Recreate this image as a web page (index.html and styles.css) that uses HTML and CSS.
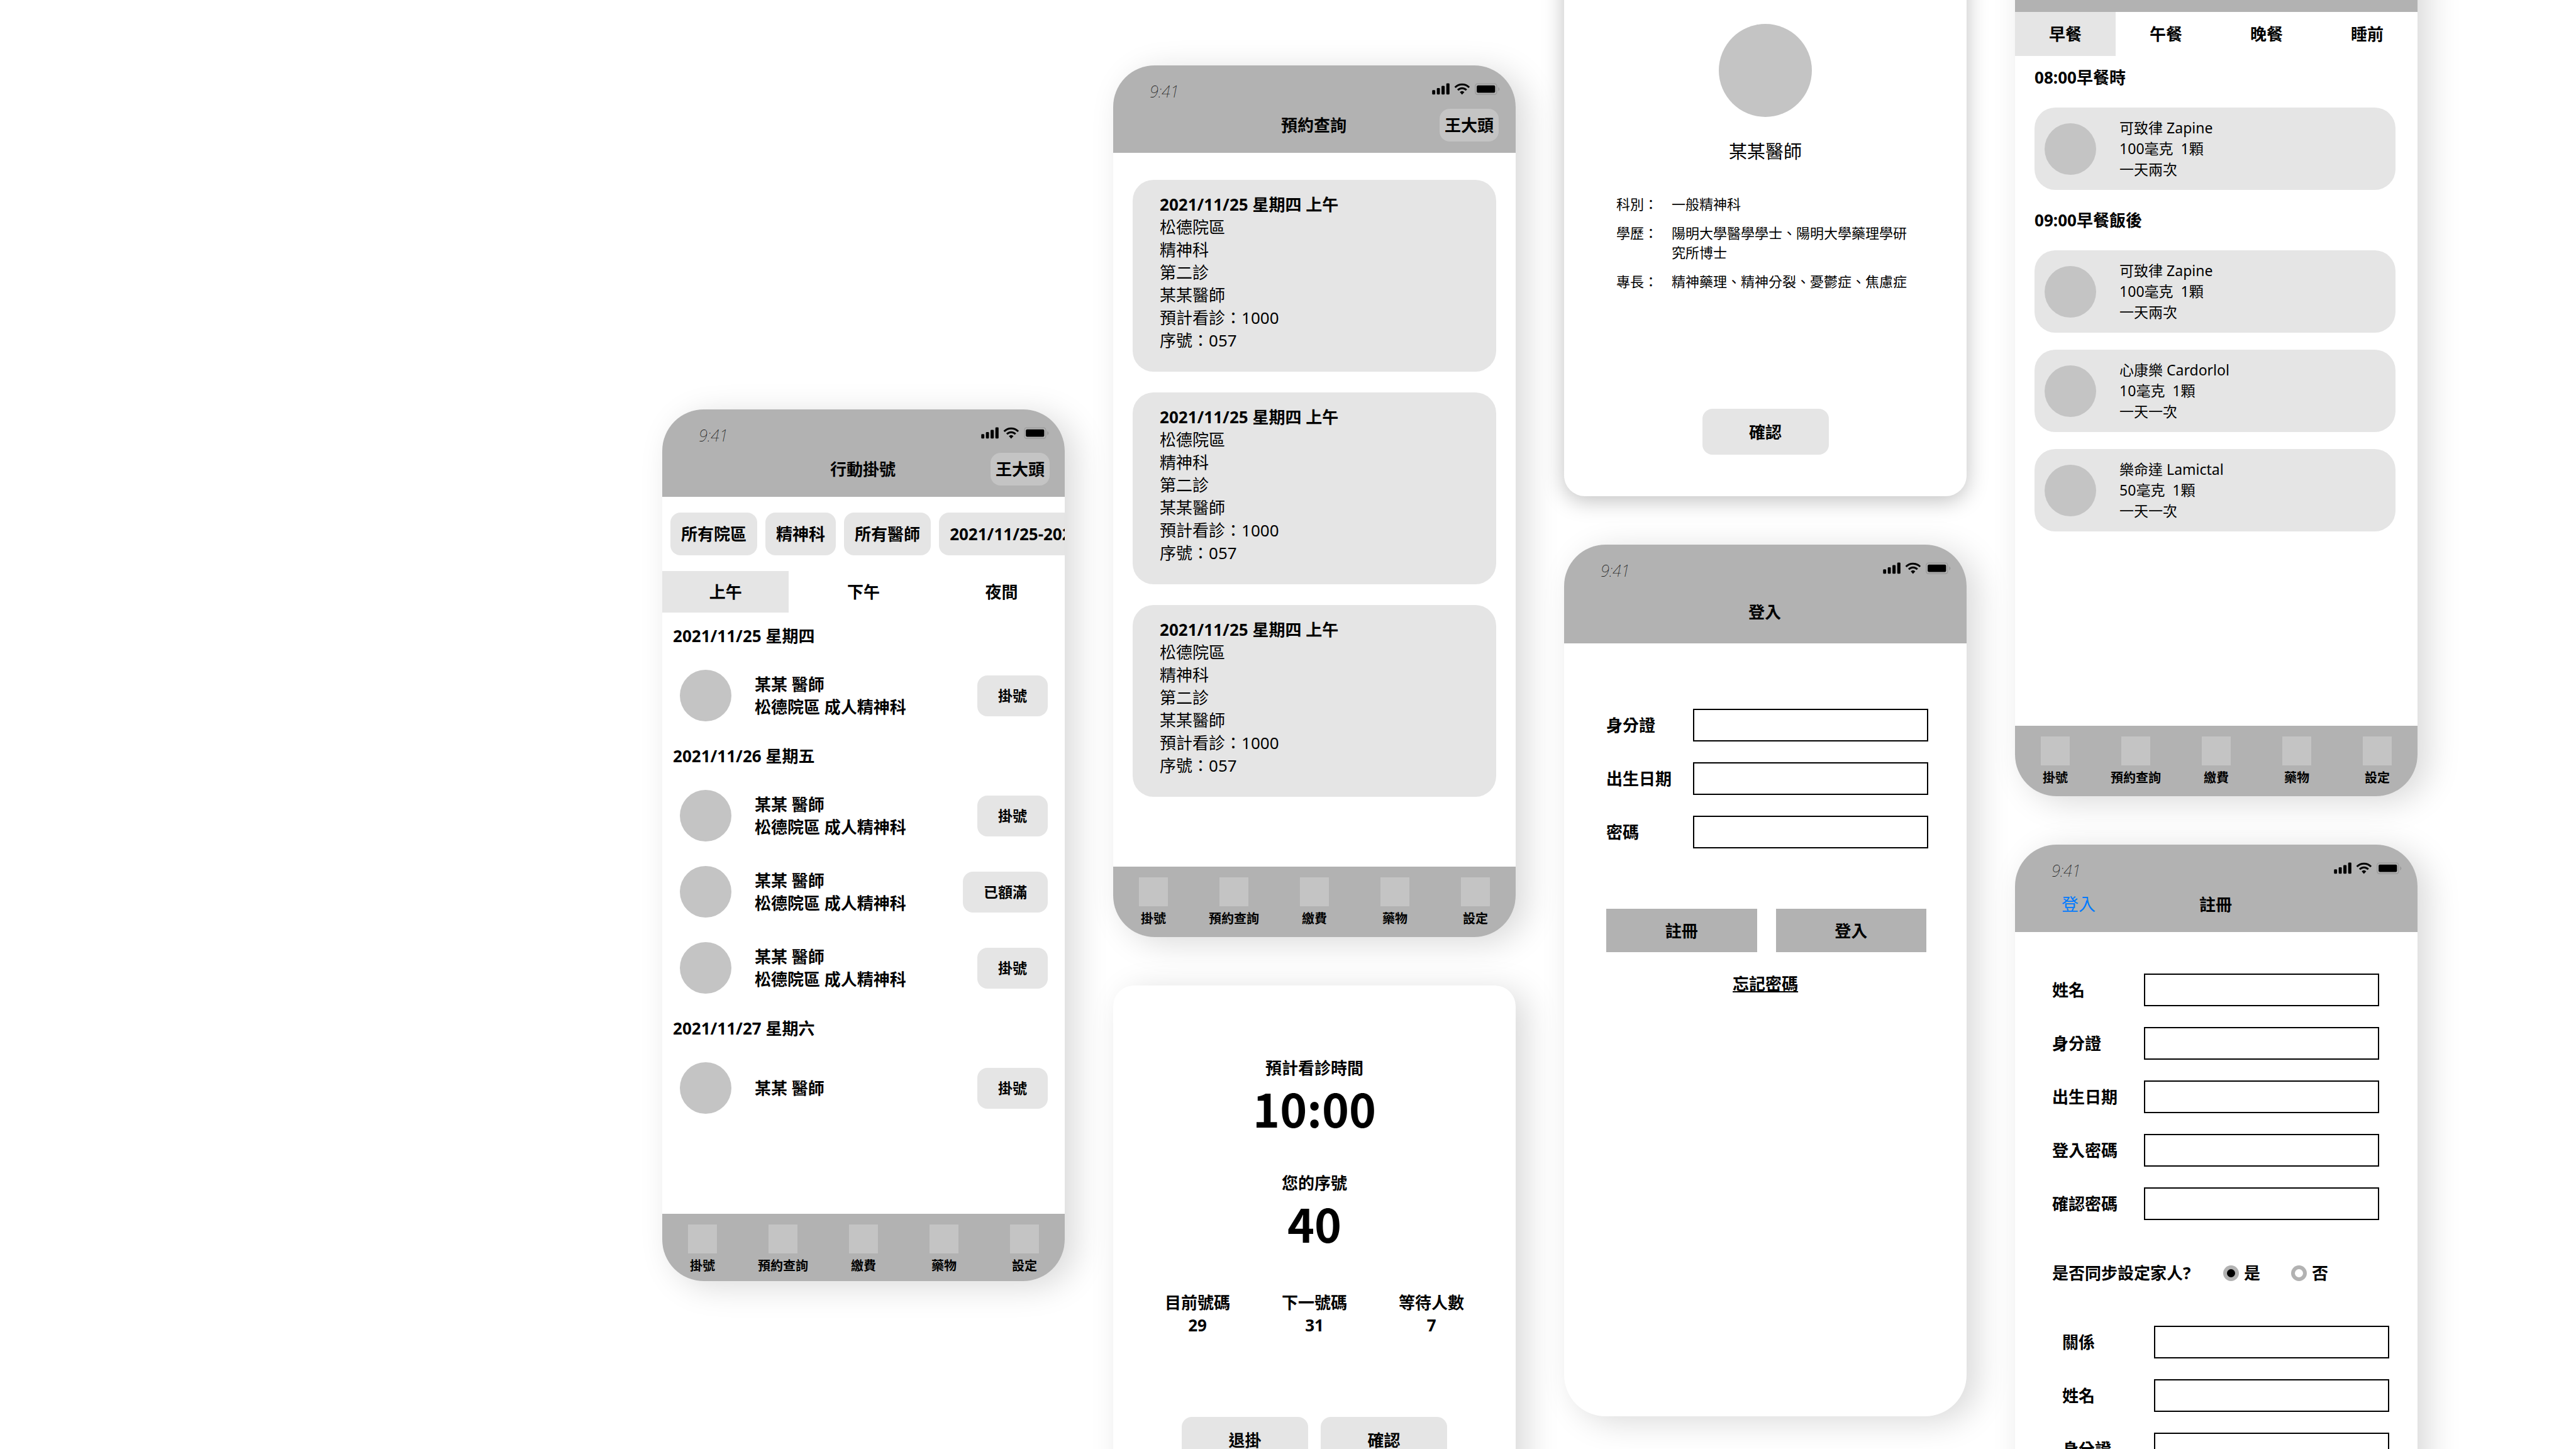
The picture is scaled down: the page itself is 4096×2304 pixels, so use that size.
FILE: index.html
```html
<!DOCTYPE html>
<html lang="zh-Hant">
<head>
<meta charset="utf-8">
<meta name="viewport" content="width=device-width, initial-scale=1">
<title>行動掛號</title>
<link rel="stylesheet" href="styles.css">
</head>
<body>
<svg class="sprite" aria-hidden="true">
  <symbol id="status-icons" viewBox="45 43 464 82">
    <rect x="45" y="92" width="21" height="30" rx="6"/>
    <rect x="77" y="77" width="21" height="45" rx="6"/>
    <rect x="109" y="62" width="22" height="60" rx="6"/>
    <rect x="142" y="45" width="22" height="77" rx="6"/>
    <path d="M202 73A68 68 0 0 1 299 73" fill="none" stroke="#000" stroke-width="13"/>
    <path d="M221 92A40 40 0 0 1 280 92" fill="none" stroke="#000" stroke-width="13"/>
    <path d="M235 106Q250 91 266 106L250 123Z"/>
    <rect x="341" y="48" width="147" height="74" rx="16" fill="none" stroke="#000" stroke-opacity=".13" stroke-width="6"/>
    <rect x="351" y="59" width="126" height="51" rx="9"/>
    <path d="M498 71Q508 76 508 85Q508 94 498 99Z" fill-opacity=".13"/>
  </symbol>
</svg>

<main class="board">
  <div class="column column--booking">
    <section class="phone">
      <header class="header">
        <div class="status"><span class="status__time">9:41</span><svg class="status__icons" aria-hidden="true"><use href="#status-icons"/></svg></div>
        <div class="header__row"><h1 class="header__title">行動掛號</h1><button class="pill" type="button">王大頭</button></div>
      </header>
      <div class="filters">
        <button class="filter" type="button">所有院區</button>
        <button class="filter" type="button">精神科</button>
        <button class="filter" type="button">所有醫師</button>
        <button class="filter" type="button">2021/11/25-2021/12/25</button>
      </div>
      <div class="tabs tabs--three">
        <button class="tab tab--active" type="button">上午</button>
        <button class="tab" type="button">下午</button>
        <button class="tab" type="button">夜間</button>
      </div>
      <div class="schedule">
        <section class="day">
          <h2 class="day__title">2021/11/25 星期四</h2>
          <ul class="doctors">
            <li class="doctor"><span class="avatar"></span><p class="doctor__text">某某 醫師<br>松德院區 成人精神科</p><button class="book" type="button">掛號</button></li>
          </ul>
        </section>
        <section class="day">
          <h2 class="day__title">2021/11/26 星期五</h2>
          <ul class="doctors">
            <li class="doctor"><span class="avatar"></span><p class="doctor__text">某某 醫師<br>松德院區 成人精神科</p><button class="book" type="button">掛號</button></li>
            <li class="doctor"><span class="avatar"></span><p class="doctor__text">某某 醫師<br>松德院區 成人精神科</p><button class="book" type="button">已額滿</button></li>
            <li class="doctor"><span class="avatar"></span><p class="doctor__text">某某 醫師<br>松德院區 成人精神科</p><button class="book" type="button">掛號</button></li>
          </ul>
        </section>
        <section class="day">
          <h2 class="day__title">2021/11/27 星期六</h2>
          <ul class="doctors">
            <li class="doctor"><span class="avatar"></span><p class="doctor__text">某某 醫師</p><button class="book" type="button">掛號</button></li>
          </ul>
        </section>
      </div>
      <nav class="tabbar tabbar--short">
        <a class="tabbar__item" href="#">掛號</a>
        <a class="tabbar__item" href="#">預約查詢</a>
        <a class="tabbar__item" href="#">繳費</a>
        <a class="tabbar__item" href="#">藥物</a>
        <a class="tabbar__item" href="#">設定</a>
      </nav>
    </section>
  </div>

  <div class="column column--lookup">
    <section class="phone">
      <header class="header">
        <div class="status"><span class="status__time">9:41</span><svg class="status__icons" aria-hidden="true"><use href="#status-icons"/></svg></div>
        <div class="header__row"><h1 class="header__title">預約查詢</h1><button class="pill pill--inset" type="button">王大頭</button></div>
      </header>
      <div class="visits">
        <article class="visit"><h2 class="visit__title">2021/11/25 星期四 上午</h2><p>松德院區<br>精神科<br>第二診<br>某某醫師<br>預計看診：1000<br>序號：057</p></article>
        <article class="visit"><h2 class="visit__title">2021/11/25 星期四 上午</h2><p>松德院區<br>精神科<br>第二診<br>某某醫師<br>預計看診：1000<br>序號：057</p></article>
        <article class="visit"><h2 class="visit__title">2021/11/25 星期四 上午</h2><p>松德院區<br>精神科<br>第二診<br>某某醫師<br>預計看診：1000<br>序號：057</p></article>
      </div>
      <nav class="tabbar">
        <a class="tabbar__item" href="#">掛號</a>
        <a class="tabbar__item" href="#">預約查詢</a>
        <a class="tabbar__item" href="#">繳費</a>
        <a class="tabbar__item" href="#">藥物</a>
        <a class="tabbar__item" href="#">設定</a>
      </nav>
    </section>

    <section class="dialog">
      <h2 class="dialog__label">預計看診時間</h2>
      <p class="dialog__figure">10:00</p>
      <h2 class="dialog__label dialog__label--next">您的序號</h2>
      <p class="dialog__figure">40</p>
      <dl class="counts">
        <div><dt>目前號碼</dt><dd>29</dd></div>
        <div><dt>下一號碼</dt><dd>31</dd></div>
        <div><dt>等待人數</dt><dd>7</dd></div>
      </dl>
      <div class="dialog__actions">
        <button class="action" type="button">退掛</button>
        <button class="action" type="button">確認</button>
      </div>
    </section>
  </div>

  <div class="column column--doctor">
    <section class="profile">
      <span class="avatar avatar--large"></span>
      <h2 class="profile__name">某某醫師</h2>
      <dl class="facts">
        <dt>科別：</dt><dd>一般精神科</dd>
        <dt>學歷：</dt><dd>陽明大學醫學學士、陽明大學藥理學研究所博士</dd>
        <dt>專長：</dt><dd>精神藥理、精神分裂、憂鬱症、焦慮症</dd>
      </dl>
      <button class="action" type="button">確認</button>
    </section>

    <section class="phone">
      <header class="header header--tall">
        <div class="status"><span class="status__time">9:41</span><svg class="status__icons" aria-hidden="true"><use href="#status-icons"/></svg></div>
        <div class="header__row"><h1 class="header__title">登入</h1></div>
      </header>
      <form class="form form--login">
        <div class="field"><label class="field__label" for="login-id">身分證</label><input class="field__input" id="login-id" type="text"></div>
        <div class="field"><label class="field__label" for="login-birth">出生日期</label><input class="field__input" id="login-birth" type="text"></div>
        <div class="field"><label class="field__label" for="login-pass">密碼</label><input class="field__input" id="login-pass" type="password"></div>
        <div class="form__actions">
          <button class="submit" type="button">註冊</button>
          <button class="submit" type="submit">登入</button>
        </div>
      </form>
      <a class="forgot" href="#">忘記密碼</a>
    </section>
  </div>

  <div class="column column--medicine">
    <section class="phone">
      <header class="header">
        <div class="status"><span class="status__time">9:41</span><svg class="status__icons" aria-hidden="true"><use href="#status-icons"/></svg></div>
        <div class="header__row"></div>
      </header>
      <div class="tabs tabs--four">
        <button class="tab tab--active" type="button">早餐</button>
        <button class="tab" type="button">午餐</button>
        <button class="tab" type="button">晚餐</button>
        <button class="tab" type="button">睡前</button>
      </div>
      <div class="meals">
        <section class="meal">
          <h2 class="meal__title">08:00早餐時</h2>
          <ul class="drugs">
            <li class="drug"><span class="avatar"></span><p>可致律 Zapine<br>100毫克&nbsp; 1顆<br>一天兩次</p></li>
          </ul>
        </section>
        <section class="meal">
          <h2 class="meal__title">09:00早餐飯後</h2>
          <ul class="drugs">
            <li class="drug"><span class="avatar"></span><p>可致律 Zapine<br>100毫克&nbsp; 1顆<br>一天兩次</p></li>
            <li class="drug"><span class="avatar"></span><p>心康樂 Cardorlol<br>10毫克&nbsp; 1顆<br>一天一次</p></li>
            <li class="drug"><span class="avatar"></span><p>樂命達 Lamictal<br>50毫克&nbsp; 1顆<br>一天一次</p></li>
          </ul>
        </section>
      </div>
      <nav class="tabbar">
        <a class="tabbar__item" href="#">掛號</a>
        <a class="tabbar__item" href="#">預約查詢</a>
        <a class="tabbar__item" href="#">繳費</a>
        <a class="tabbar__item" href="#">藥物</a>
        <a class="tabbar__item" href="#">設定</a>
      </nav>
    </section>

    <section class="phone">
      <header class="header">
        <div class="status"><span class="status__time">9:41</span><svg class="status__icons" aria-hidden="true"><use href="#status-icons"/></svg></div>
        <div class="header__row"><a class="back" href="#">登入</a><h1 class="header__title">註冊</h1></div>
      </header>
      <form class="form form--register">
        <div class="field"><label class="field__label" for="reg-name">姓名</label><input class="field__input" id="reg-name" type="text"></div>
        <div class="field"><label class="field__label" for="reg-id">身分證</label><input class="field__input" id="reg-id" type="text"></div>
        <div class="field"><label class="field__label" for="reg-birth">出生日期</label><input class="field__input" id="reg-birth" type="text"></div>
        <div class="field"><label class="field__label" for="reg-pass">登入密碼</label><input class="field__input" id="reg-pass" type="password"></div>
        <div class="field"><label class="field__label" for="reg-again">確認密碼</label><input class="field__input" id="reg-again" type="password"></div>
        <div class="choice" role="radiogroup" aria-labelledby="family-question">
          <span class="choice__question" id="family-question">是否同步設定家人?</span>
          <label class="choice__option"><input class="radio" type="radio" name="family" checked>是</label>
          <label class="choice__option"><input class="radio" type="radio" name="family">否</label>
        </div>
        <div class="family">
          <div class="field"><label class="field__label" for="fam-relation">關係</label><input class="field__input" id="fam-relation" type="text"></div>
          <div class="field"><label class="field__label" for="fam-name">姓名</label><input class="field__input" id="fam-name" type="text"></div>
          <div class="field"><label class="field__label" for="fam-id">身分證</label><input class="field__input" id="fam-id" type="text"></div>
        </div>
      </form>
    </section>
  </div>
</main>
</body>
</html>
```
FILE: styles.css
```css
:root {
  --bar: #b2b2b2;
  --fill: #e5e5e5;
  --dot: #c4c4c4;
  --shadow: 17px 9px 52px rgba(0, 0, 0, .15);
}

* {
  box-sizing: border-box;
  margin: 0;
  padding: 0;
}

body {
  background: #fff;
  color: #000;
  font: 400 26px/36px "Noto Sans", "Noto Sans CJK TC", sans-serif;
}

h1,
h2,
button,
input {
  font: inherit;
  font-weight: 700;
}

button {
  border: 0;
  color: inherit;
  cursor: pointer;
  white-space: nowrap;
}

a {
  color: inherit;
}

ul {
  list-style: none;
}

.sprite {
  position: absolute;
  width: 0;
  height: 0;
}

/* Board of artboards, each column starting at its own height */
.board {
  display: grid;
  grid-template-columns: repeat(4, minmax(0, 1fr));
  align-items: start;
  gap: 77px;
  height: 100vh;
  padding: 0 6.15% 0 25.71%;
  overflow: hidden;
}

.column {
  display: flex;
  flex-direction: column;
  gap: 77px;
}

.column--booking { margin-top: 651px; }
.column--lookup { margin-top: 104px; }
.column--doctor { margin-top: -121px; }
.column--medicine { margin-top: -120px; }

.phone {
  display: flex;
  flex-direction: column;
  min-height: 1386px;
  border-radius: 66px;
  background: #fff;
  box-shadow: var(--shadow);
}

/* Header */
.header {
  display: flex;
  flex-direction: column;
  gap: 10px;
  padding: 23px 24px 18px 58px;
  border-radius: 66px 66px 0 0;
  background: var(--bar);
}

.header--tall {
  gap: 22px;
  padding-bottom: 24px;
}

.status {
  display: flex;
  align-items: flex-start;
  justify-content: space-between;
}

.status__time {
  font-size: 25px;
  font-style: italic;
  font-weight: 100;
}

.status__icons {
  width: 110px;
  height: 19px;
  margin-top: 5px;
}

.header__row {
  display: grid;
  grid-template-columns: 1fr auto 1fr;
  align-items: center;
  height: 52px;
  margin-left: -36px;
}

.header__title {
  grid-column: 2;
}

.pill {
  grid-column: 3;
  justify-self: end;
  height: 52px;
  padding: 0 8px;
  border-radius: 16px;
  background: var(--dot);
}

.pill--inset {
  margin-right: 3px;
}

.back {
  grid-column: 1;
  padding-left: 52px;
  color: #007aff;
  font-size: 27px;
  text-decoration: none;
}

/* Filters and tabs */
.filters {
  display: flex;
  gap: 13px;
  padding: 25px 0 25px 13px;
  overflow: hidden;
}

.filter {
  flex: none;
  height: 68px;
  padding: 0 17px;
  border-radius: 16px;
  background: var(--fill);
}

.tabs {
  display: grid;
}

.tabs--three {
  grid-template-columns: repeat(3, 1fr);
  gap: 18px;
}

.tabs--four {
  grid-template-columns: repeat(4, 1fr);
}

.tab {
  height: 66px;
  background: none;
}

.tabs--four .tab {
  height: 70px;
}

.tab--active {
  background: var(--fill);
}

/* Doctor schedule */
.schedule {
  display: flex;
  flex-direction: column;
  gap: 37px;
  padding: 19px 27px 36px 17px;
}

.day {
  display: flex;
  flex-direction: column;
  gap: 36px;
}

.doctors {
  display: flex;
  flex-direction: column;
  gap: 39px;
}

.doctor {
  display: flex;
  align-items: center;
  gap: 37px;
  padding-left: 11px;
  font-weight: 700;
}

.doctor__text {
  flex: 1;
}

.avatar {
  flex: none;
  width: 82px;
  height: 82px;
  border-radius: 50%;
  background: var(--dot);
}

.avatar--large {
  width: 148px;
  height: 148px;
}

.book {
  height: 65px;
  padding: 0 33px;
  border-radius: 16px;
  background: var(--fill);
  font-size: 23px;
}

/* Bottom navigation */
.tabbar {
  display: grid;
  grid-template-columns: repeat(5, 1fr);
  height: 112px;
  margin-top: auto;
  padding-top: 17px;
  border-radius: 0 0 66px 66px;
  background: var(--bar);
}

.tabbar--short {
  height: 107px;
}

.tabbar__item {
  display: flex;
  flex-direction: column;
  align-items: center;
  gap: 6px;
  font-size: 20px;
  font-weight: 700;
  line-height: 28px;
  text-decoration: none;
}

.tabbar__item::before {
  width: 46px;
  height: 46px;
  background: var(--dot);
  content: "";
}

/* Appointment cards */
.visits {
  display: flex;
  flex-direction: column;
  gap: 33px;
  padding: 43px 31px;
}

.visit {
  padding: 21px 43px 32px;
  border-radius: 33px;
  background: var(--fill);
}

/* Medicine reminders */
.meals {
  display: flex;
  flex-direction: column;
  gap: 30px;
  padding: 16px 35px 36px 31px;
}

.meal {
  display: flex;
  flex-direction: column;
  gap: 30px;
}

.drugs {
  display: flex;
  flex-direction: column;
  gap: 27px;
}

.drug {
  display: flex;
  align-items: center;
  gap: 37px;
  padding: 16px;
  border-radius: 33px;
  background: var(--fill);
  font-size: 23px;
  line-height: 33px;
}

/* Queue dialog */
.dialog {
  display: flex;
  flex-direction: column;
  align-items: center;
  padding: 113px 0 66px;
  border-radius: 33px;
  background: #fff;
  box-shadow: var(--shadow);
}

.dialog__label--next {
  margin-top: 57px;
}

.dialog__figure {
  font: 700 73px/90px "Noto Sans CJK TC", sans-serif;
}

.counts {
  display: grid;
  grid-template-columns: repeat(3, 104px);
  gap: 82px;
  margin: 64px 0 128px;
  font-weight: 700;
  text-align: center;
}

.dialog__actions {
  display: flex;
  gap: 20px;
}

.action {
  width: 201px;
  height: 73px;
  border-radius: 16px;
  background: var(--fill);
}

/* Doctor profile */
.profile {
  display: flex;
  flex-direction: column;
  align-items: center;
  padding: 159px 83px 66px;
  border-radius: 33px;
  background: #fff;
  box-shadow: 0 7px 34px rgba(0, 0, 0, .25);
}

.profile__name {
  margin: 35px 0 48px;
  font-size: 29px;
  font-weight: 400;
  line-height: 40px;
}

.facts {
  display: grid;
  grid-template-columns: auto 1fr;
  gap: 15px 22px;
  align-self: stretch;
  margin-bottom: 187px;
  font-size: 22px;
  line-height: 31px;
}

/* Forms */
.form {
  display: flex;
  flex-direction: column;
  gap: 33px;
}

.form--login {
  padding: 104px 61px 32px 67px;
}

.form--register {
  padding: 66px 61px 66px 59px;
}

.field {
  display: flex;
  align-items: center;
}

.field__label {
  flex: none;
  width: 146px;
  font-weight: 700;
}

.form--login .field__label {
  width: 138px;
}

.field__input {
  flex: 1;
  min-width: 0;
  height: 52px;
  padding: 0 12px;
  border: 2px solid #000;
  border-radius: 0;
  background: #fff;
}

.form__actions {
  display: grid;
  grid-template-columns: 1fr 1fr;
  gap: 30px;
  margin-top: 63px;
  padding-right: 3px;
}

.submit {
  height: 69px;
  background: var(--bar);
}

.forgot {
  align-self: center;
  font-weight: 700;
}

.choice {
  display: flex;
  align-items: center;
  gap: 49px;
  margin: 33px 0;
  font-weight: 700;
}

.choice__question {
  width: 223px;
  white-space: nowrap;
}

.choice__option {
  display: flex;
  align-items: center;
  gap: 8px;
}

.radio {
  width: 25px;
  height: 25px;
  border: 6px solid var(--bar);
  border-radius: 50%;
  background: #fff;
  appearance: none;
}

.radio:checked {
  background: #000;
}

.family {
  display: flex;
  flex-direction: column;
  gap: 33px;
  margin: 0 -16px 0 16px;
}
```
